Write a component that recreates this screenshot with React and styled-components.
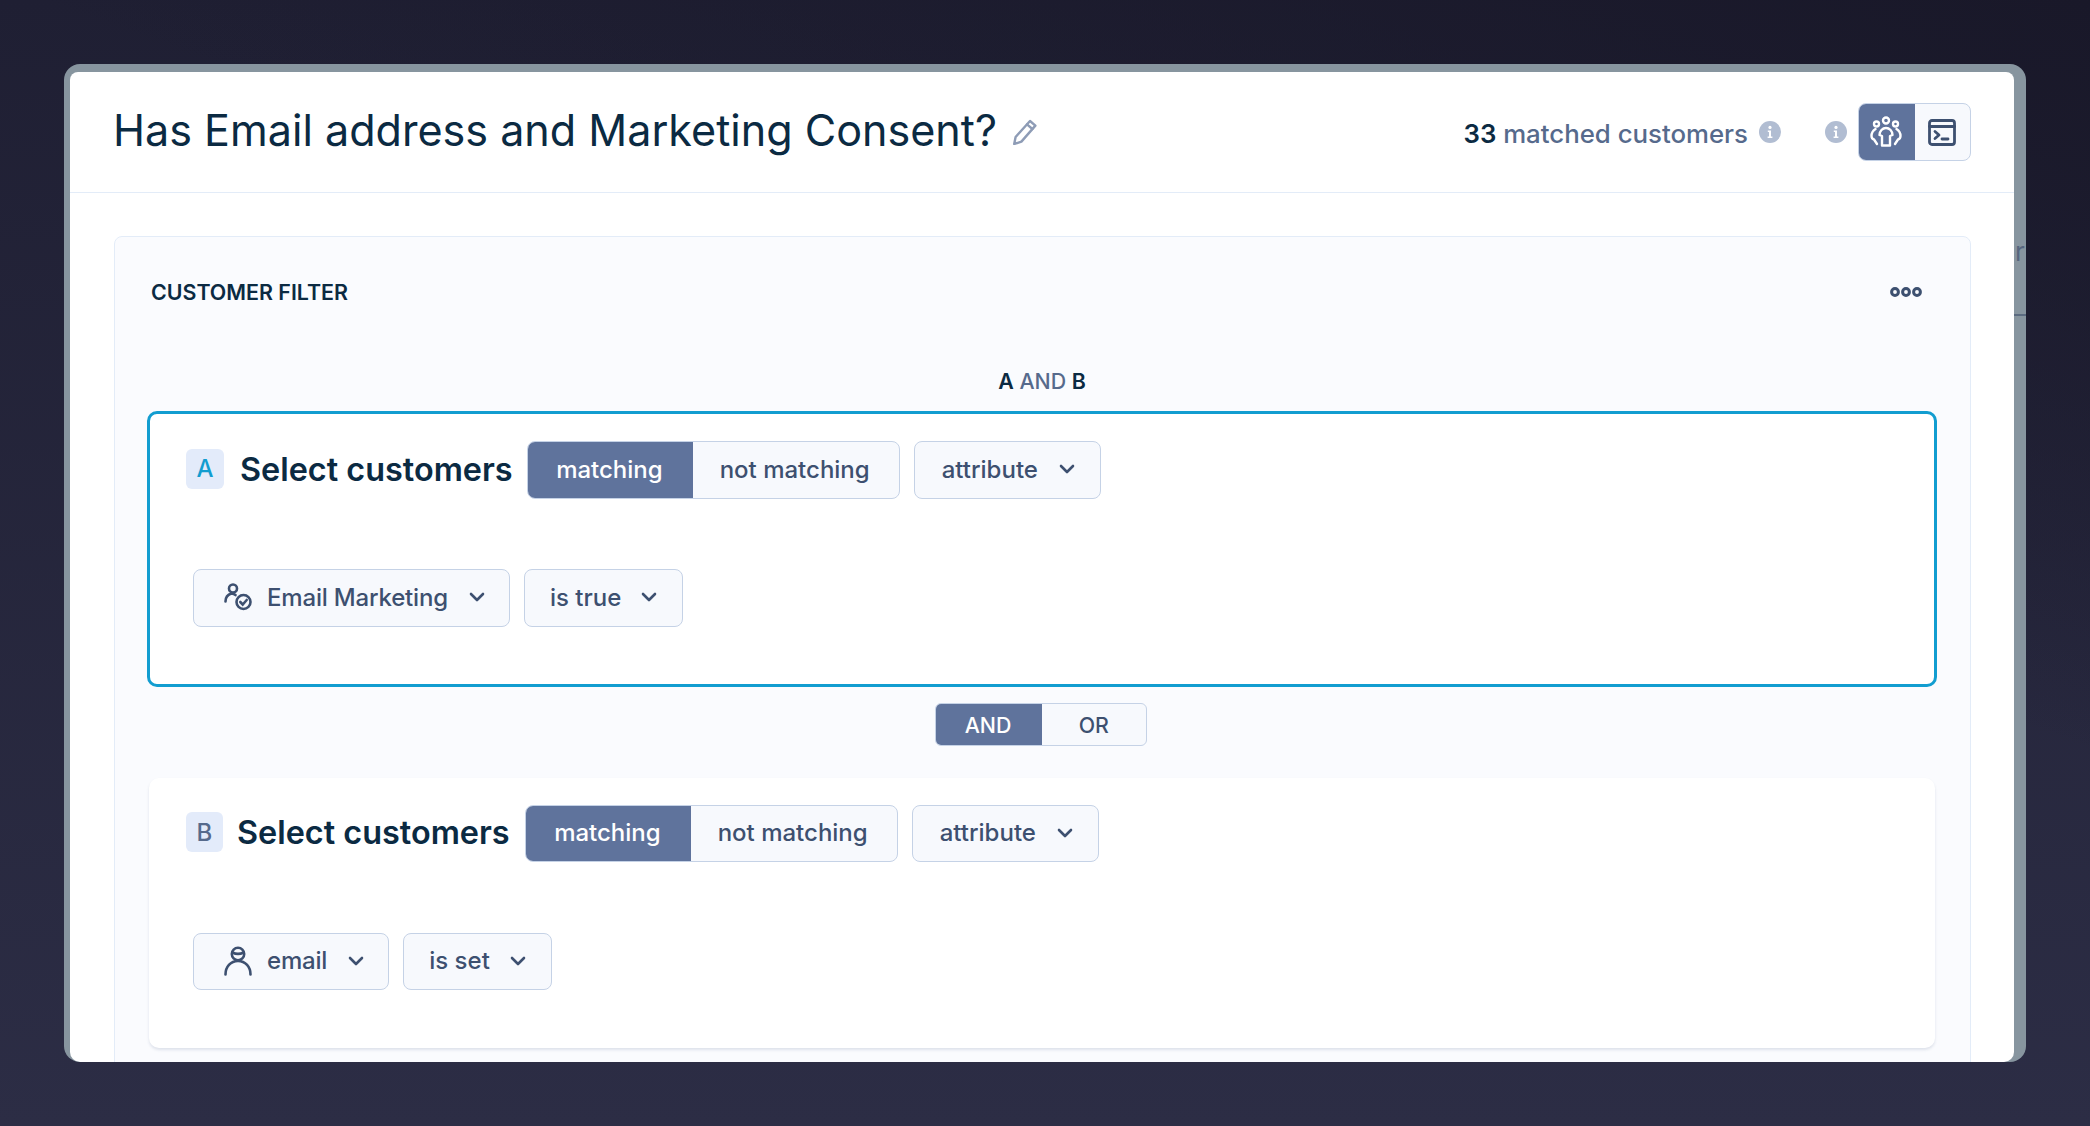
import React from 'react'
import styled, { createGlobalStyle } from 'styled-components'

const GlobalStyle = createGlobalStyle`
  html, body { margin: 0; padding: 0; }
  body { font-family: Inter, "Noto Sans", sans-serif; color: #0b2a42; }
  * { box-sizing: border-box; }
`

const Page = styled.div`
  width: 2090px;
  height: 1126px;
  overflow: hidden;
  padding: 64px 64px 64px 64px;
  background: linear-gradient(200deg, #191829 0%, #20203400 40%), linear-gradient(180deg, #1f1f33 0%, #2c2d45 100%);
`

const Frame = styled.div`
  position: relative;
  width: 1962px;
  height: 998px;
  padding: 8px 12px 0 6px;
  background: #87959f;
  border-radius: 16px;
  overflow: hidden;
`

// bit of the page behind the modal that shows through the right edge
const BehindStrip = styled.div`
  position: absolute;
  top: 168px;
  right: 0;
  width: 12px;
  height: 84px;
  overflow: hidden;
  border-bottom: 2px solid #5b6b80;
  color: #56667e;
  font-size: 26px;
  line-height: 32px;
  padding-top: 4px;
  padding-left: 1px;
`

const Modal = styled.div`
  height: 100%;
  background: #fff;
  border-radius: 8px 8px 10px 10px;
  overflow: hidden;
`

const Header = styled.header`
  height: 121px;
  border-bottom: 1.5px solid #e3ecf8;
  display: flex;
  align-items: center;
  padding: 0 43px 0 43px;
`

const Title = styled.h1`
  margin: -2px 0 0;
  font-size: 43.1px;
  font-weight: 400;
  color: #0b2a42;
  line-height: 1.2;
`

const PencilWrap = styled.span`
  display: flex;
  margin-left: 15px;
  margin-top: 0;
`

const Spacer = styled.div`
  flex: 1;
`

const Matched = styled.div`
  font-size: 25.8px;
  font-weight: 500;
  color: #566a8c;
  margin-top: 2px;
  b {
    font-weight: 600;
    color: #0b2a42;
  }
`

const InfoDot = styled.span`
  display: flex;
  margin-left: ${(p) => p.$gap}px;
`

const ViewToggle = styled.div`
  display: flex;
  height: 58px;
  width: 113px;
  margin-left: 11px;
  border-radius: 8px;
  overflow: hidden;
  border: 1.5px solid #c5d2e6;
  background: #f7f9fd;
`

const ViewButton = styled.div`
  display: flex;
  align-items: center;
  justify-content: center;
  width: ${(p) => (p.$active ? 57 : 55)}px;
  margin: ${(p) => (p.$active ? '-1.5px 0 -1.5px -1.5px' : '0')};
  background: ${(p) => (p.$active ? '#5f739c' : 'transparent')};
`

const Panel = styled.section`
  margin: 43px 43px 0 44px;
  padding: 0 33px 0 32px;
  background: #fafbfe;
  border: 1.5px solid #e3ecf8;
  border-radius: 8px;
  height: 900px;
`

const PanelHead = styled.div`
  display: flex;
  align-items: center;
  justify-content: space-between;
  padding: 40px 15px 0 4px;
  height: 70px;
`

const PanelTitle = styled.div`
  font-size: 21.4px;
  font-weight: 600;
  line-height: 30px;
  color: #0b2a42;
`

const Expression = styled.div`
  margin-top: 59px;
  margin-bottom: 15px;
  text-align: center;
  font-size: 21.33px;
  line-height: 30px;
  font-weight: 500;
  color: #566a8c;
  b {
    font-weight: 600;
    color: #0b2a42;
  }
`

const Group = styled.div`
  --ctl: ${(p) => (p.$selected ? 58 : 57)}px;
  background: #fff;
  border-radius: 10px;
  ${(p) =>
    p.$selected
      ? `
    border: 3.5px solid #129dd0;
    padding: 27px 33px 57px 36px;
  `
      : `
    margin: 0 2px;
    padding: 27px 33px 58px 37px;
    box-shadow: 0 2px 3px rgba(60, 80, 120, 0.14);
  `}
`

const Row = styled.div`
  display: flex;
  align-items: center;
`

const Badge = styled.span`
  width: ${(p) => (p.$selected ? 38 : 37)}px;
  height: 40px;
  margin-top: -3px;
  margin-right: ${(p) => (p.$selected ? 16 : 14)}px;
  display: flex;
  align-items: center;
  justify-content: center;
  background: #e3ebfa;
  border-radius: 6px;
  font-size: 24px;
  font-weight: 500;
  color: ${(p) => (p.$selected ? '#129dd0' : '#566a8c')};
`

const GroupTitle = styled.h2`
  margin: -2px ${(p) => (p.$selected ? 14 : 15)}px 0 0;
  font-size: 32.4px;
  font-weight: 600;
  color: #0b2a42;
  white-space: nowrap;
`

const Segmented = styled.div`
  display: flex;
  height: var(--ctl);
  border-radius: 8px;
  overflow: hidden;
  border: 1.5px solid #c5d2e6;
  background: #f7f9fd;
`

const Segment = styled.div`
  display: flex;
  align-items: center;
  font-size: 24px;
  font-weight: 500;
  color: ${(p) => (p.$active ? '#fff' : '#3d5070')};
  background: ${(p) => (p.$active ? '#5f739c' : 'transparent')};
  padding: ${(p) => (p.$active ? '0 30px 2px' : '0 29px 2px 27px')};
  margin: ${(p) => (p.$active ? '-1.5px 0 -1.5px -1.5px' : '0')};
`

const Select = styled.div`
  display: flex;
  align-items: center;
  height: var(--ctl);
  padding: 0 ${(p) => p.$right || 24}px 2px ${(p) => p.$left || 26}px;
  margin-left: ${(p) => p.$ml ?? 14}px;
  border-radius: 8px;
  border: 1.5px solid #c5d2e6;
  background: #f7f9fd;
  font-size: 24px;
  font-weight: 500;
  color: #3d5070;
  white-space: nowrap;
`

const FieldName = styled.span`
  letter-spacing: -0.18px;
`

const IconSlot = styled.span`
  display: flex;
  margin-right: 15px;
`

const Chevron = styled.svg`
  margin-left: ${(p) => p.$gap || 21}px;
  flex: none;
`

const Conditions = styled(Row)`
  margin-top: ${(p) => p.$top}px;
  padding-left: 7px;
`

const Logic = styled.div`
  display: flex;
  width: 212px;
  height: 43px;
  margin: 16px auto 32px;
  transform: translateX(-1px);
  border-radius: 6px;
  overflow: hidden;
  border: 1.5px solid #c5d2e6;
  background: #f7f9fd;
`

const LogicButton = styled.div`
  flex: ${(p) => (p.$active ? '0 0 107px' : 1)};
  margin: ${(p) => (p.$active ? '-1.5px 0 -1.5px -1.5px' : '0')};
  display: flex;
  align-items: center;
  justify-content: center;
  font-size: 21.33px;
  font-weight: 500;
  color: ${(p) => (p.$active ? '#fff' : '#3d5070')};
  background: ${(p) => (p.$active ? '#5f739c' : 'transparent')};
`

const ChevronIcon = ({ gap }) => (
  <Chevron $gap={gap} width="16" height="10" viewBox="0 0 16 10" fill="none" stroke="#3d5070" strokeWidth="2.6" strokeLinecap="round" strokeLinejoin="round">
    <path d="M2 2l6 6 6-6" />
  </Chevron>
)

const PencilIcon = () => (
  <svg width="26" height="26" viewBox="0 0 26 26" fill="none" stroke="#8e9cb6" strokeWidth="2.4" strokeLinejoin="round" strokeLinecap="round">
    <path d="M18 2l5.400 4.600L9.400 22.600 2.200 25l1.400-7z" />
    <path d="M15 5.400l5.400 4.600" />
  </svg>
)

const InfoIcon = () => (
  <svg width="22" height="22" viewBox="0 0 22 22">
    <circle cx="11" cy="11" r="11" fill="#b1bdd2" />
    <circle cx="11" cy="6.400" r="1.600" fill="#fff" />
    <path d="M8.800 9.400h3.200v6h1.400v1.600H8.600v-1.600H10v-4.400H8.800z" fill="#fff" />
  </svg>
)

const CustomersIcon = () => (
  <svg width="32" height="32" viewBox="0 0 32 32" fill="none" stroke="#fff" strokeWidth="2.400" strokeLinecap="round" strokeLinejoin="round">
    <circle cx="16" cy="4.500" r="3" />
    <circle cx="6.500" cy="8" r="2.500" />
    <circle cx="25.500" cy="8" r="2.500" />
    <path d="M12 29.500h8v-9.500l2.500-1c0-4-3-7-6.500-7s-6.500 3-6.500 7l2.500 1z" />
    <path d="M5.500 13C3 14.500 1.500 17 1.500 20c0 2 1 3 2.500 3.500L7 28" />
    <path d="M26.500 13c2.500 1.500 4 4 4 7 0 2-1 3-2.500 3.500L25 28" />
  </svg>
)

const TerminalIcon = () => (
  <svg width="28" height="27" viewBox="0 0 28 27" fill="none" stroke="#3d5070" strokeWidth="2.800" strokeLinecap="round" strokeLinejoin="round">
    <rect x="1.500" y="1.500" width="25" height="24" rx="2.500" />
    <path d="M1.500 7.500h25" />
    <path d="M7 12.500l4 3.500-4 3.500" />
    <path d="M14 20h6" />
  </svg>
)

const MoreIcon = () => (
  <svg width="32" height="12" viewBox="0 0 32 12" fill="none" stroke="#3d5070" strokeWidth="3">
    <circle cx="5" cy="6" r="3.400" />
    <circle cx="16" cy="6" r="3.400" />
    <circle cx="27" cy="6" r="3.400" />
  </svg>
)

const UserCheckIcon = () => (
  <svg width="28" height="28" viewBox="0 0 28 28" fill="none" stroke="#3d5070" strokeWidth="2.600" strokeLinecap="round">
    <circle cx="9" cy="5.500" r="4" />
    <path d="M1.500 18.500c0-4 2.500-7 6-8 1.500.3 3 .8 4 1.600" />
    <circle cx="19.500" cy="19" r="7" />
    <path d="M16.300 19l2.400 2.500 4-4.500" />
  </svg>
)

const UserIcon = () => (
  <svg width="28" height="30" viewBox="0 0 28 30" fill="none" stroke="#3d5070" strokeWidth="2.600" strokeLinecap="round">
    <circle cx="14" cy="8" r="6.200" />
    <path d="M8.500 6.500c3.500 1.800 7.500 1.800 11 0" />
    <path d="M1.500 28.500c0-7.500 5-13.500 12.500-13.500s12.500 6 12.500 13.500" />
  </svg>
)

const GroupCard = ({ letter, selected, attr, attrIcon, op }) => (
  <Group $selected={selected}>
    <Row>
      <Badge $selected={selected}>{letter}</Badge>
      <GroupTitle $selected={selected}>Select customers</GroupTitle>
      <Segmented>
        <Segment $active>matching</Segment>
        <Segment>not matching</Segment>
      </Segmented>
      <Select $left={27} $right={25}>
        attribute
        <ChevronIcon />
      </Select>
    </Row>
    <Conditions $top={selected ? 70 : 71}>
      <Select $ml={0} $left={30} $right={24}>
        <IconSlot>{attrIcon}</IconSlot>
        <FieldName>{attr}</FieldName>
        <ChevronIcon gap={21} />
      </Select>
      <Select $left={25} $right={25}>
        {op}
        <ChevronIcon gap={20} />
      </Select>
    </Conditions>
  </Group>
)

export default function App() {
  return (
    <>
      <GlobalStyle />
      <Page>
        <Frame>
          <BehindStrip>r</BehindStrip>
          <Modal>
            <Header>
              <Title>Has Email address and Marketing Consent?</Title>
              <PencilWrap>
                <PencilIcon />
              </PencilWrap>
              <Spacer />
              <Matched>
                <b>33</b> matched customers
              </Matched>
              <InfoDot $gap={11}>
                <InfoIcon />
              </InfoDot>
              <InfoDot $gap={44}>
                <InfoIcon />
              </InfoDot>
              <ViewToggle>
                <ViewButton $active>
                  <CustomersIcon />
                </ViewButton>
                <ViewButton>
                  <TerminalIcon />
                </ViewButton>
              </ViewToggle>
            </Header>
            <Panel>
              <PanelHead>
                <PanelTitle>CUSTOMER FILTER</PanelTitle>
                <MoreIcon />
              </PanelHead>
              <Expression>
                <b>A</b> AND <b>B</b>
              </Expression>
              <GroupCard letter="A" selected attr="Email Marketing" attrIcon={<UserCheckIcon />} op="is true" />
              <Logic>
                <LogicButton $active>AND</LogicButton>
                <LogicButton>OR</LogicButton>
              </Logic>
              <GroupCard letter="B" attr="email" attrIcon={<UserIcon />} op="is set" />
            </Panel>
          </Modal>
        </Frame>
      </Page>
    </>
  )
}
